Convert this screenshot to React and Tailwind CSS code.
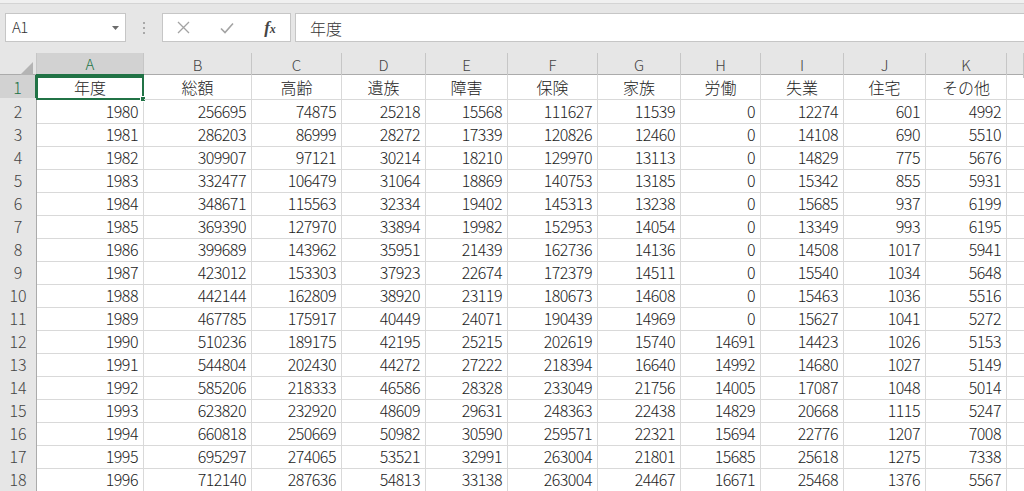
import React from 'react'

const cols = ['A', 'B', 'C', 'D', 'E', 'F', 'G', 'H', 'I', 'J', 'K', '']
const titles = ['年度', '総額', '高齢', '遺族', '障害', '保険', '家族', '労働', '失業', '住宅', 'その他']

const data = [
  [1980, 256695, 74875, 25218, 15568, 111627, 11539, 0, 12274, 601, 4992],
  [1981, 286203, 86999, 28272, 17339, 120826, 12460, 0, 14108, 690, 5510],
  [1982, 309907, 97121, 30214, 18210, 129970, 13113, 0, 14829, 775, 5676],
  [1983, 332477, 106479, 31064, 18869, 140753, 13185, 0, 15342, 855, 5931],
  [1984, 348671, 115563, 32334, 19402, 145313, 13238, 0, 15685, 937, 6199],
  [1985, 369390, 127970, 33894, 19982, 152953, 14054, 0, 13349, 993, 6195],
  [1986, 399689, 143962, 35951, 21439, 162736, 14136, 0, 14508, 1017, 5941],
  [1987, 423012, 153303, 37923, 22674, 172379, 14511, 0, 15540, 1034, 5648],
  [1988, 442144, 162809, 38920, 23119, 180673, 14608, 0, 15463, 1036, 5516],
  [1989, 467785, 175917, 40449, 24071, 190439, 14969, 0, 15627, 1041, 5272],
  [1990, 510236, 189175, 42195, 25215, 202619, 15740, 14691, 14423, 1026, 5153],
  [1991, 544804, 202430, 44272, 27222, 218394, 16640, 14992, 14680, 1027, 5149],
  [1992, 585206, 218333, 46586, 28328, 233049, 21756, 14005, 17087, 1048, 5014],
  [1993, 623820, 232920, 48609, 29631, 248363, 22438, 14829, 20668, 1115, 5247],
  [1994, 660818, 250669, 50982, 30590, 259571, 22321, 15694, 22776, 1207, 7008],
  [1995, 695297, 274065, 53521, 32991, 263004, 21801, 15685, 25618, 1275, 7338],
  [1996, 712140, 287636, 54813, 33138, 263004, 24467, 16671, 25468, 1376, 5567],
]

const gridCols = 'grid grid-cols-[37px_107px_108px_90px_84px_82px_90px_83px_80px_83px_82px_81px_17px]'

function FormulaBar() {
  return (
    <div className="h-[53px] bg-[#e6e6e6] border-t-[3px] border-[#f0f0f0] relative">
      <div className="absolute left-0 right-0 top-0 h-px bg-[#d4d4d4]" />
      <div className="flex items-start pt-[10px]">
        {/* name box */}
        <div className="ml-[5px] w-[121px] h-[29px] bg-white border border-[#c6c6c6] flex items-center justify-between pl-[6px] pr-[6px]">
          <span className="text-[15px] text-[#333] tracking-[-0.5px]">A1</span>
          <svg width="7" height="4" viewBox="0 0 7 4"><path d="M0 0h7L3.5 4z" fill="#6b6b6b" /></svg>
        </div>
        {/* dots */}
        <div className="w-[36px] h-[29px] flex flex-col items-center justify-center gap-[3px]">
          <span className="w-[2px] h-[2px] bg-[#a8a8a8]" />
          <span className="w-[2px] h-[2px] bg-[#a8a8a8]" />
          <span className="w-[2px] h-[2px] bg-[#a8a8a8]" />
        </div>
        {/* buttons */}
        <div className="w-[129px] h-[29px] bg-white border border-[#c6c6c6] flex items-center">
          <div className="w-[40px] flex justify-center">
            <svg width="13" height="13" viewBox="0 0 13 13"><path d="M1 1l11 11M12 1L1 12" stroke="#a3a3a3" strokeWidth="1.3" /></svg>
          </div>
          <div className="w-[48px] flex justify-center">
            <svg width="14" height="12" viewBox="0 0 14 12"><path d="M1 6.5l4 4L13 1.5" stroke="#a3a3a3" strokeWidth="1.6" fill="none" /></svg>
          </div>
          <div className="w-[38px] flex justify-center">
            <span className="italic font-bold text-[17px] text-[#444]" style={{ fontFamily: '"Liberation Serif", serif' }}>f<span className="text-[12px]">x</span></span>
          </div>
        </div>
        {/* input */}
        <div className="ml-[4px] flex-1 h-[29px] bg-white border border-r-0 border-[#c6c6c6] flex items-center pl-[14px]">
          <span className="text-[16px] text-[#333]">年度</span>
        </div>
      </div>
    </div>
  )
}

function HeaderRow() {
  return (
    <div className={`${gridCols} h-[22px] bg-[#e6e6e6] border-b border-[#ababab]`}>
      <div className="border-r border-[#c6c6c6] flex items-end justify-end pr-[3px] pb-[3px]">
        <svg width="13" height="13" viewBox="0 0 13 13"><path d="M13 0V13H0z" fill="#b4b4b4" /></svg>
      </div>
      {cols.map((c, i) => (
        <div
          key={i}
          className={`flex items-center justify-center text-[15px] border-r border-[#c6c6c6] ${c === 'A' ? 'bg-[#d2d2d2] text-[#217346] border-b-2 border-b-[#217346]' : 'text-[#444]'}`}
        >
          {c}
        </div>
      ))}
    </div>
  )
}

function RowHead({ n, active }) {
  return (
    <div className={`flex items-center justify-center text-[16px] border-b border-[#cfcfcf] ${active ? 'bg-[#d2d2d2] text-[#217346] border-r-2 border-r-[#217346]' : 'bg-[#e6e6e6] text-[#444] border-r border-r-[#ababab]'}`}>
      {n}
    </div>
  )
}

export default function App() {
  return (
    <div
      className="w-[1024px] h-[491px] overflow-hidden bg-white font-light"
      style={{ fontFamily: '"Noto Sans CJK JP", "Noto Sans", sans-serif' }}
    >
      <FormulaBar />
      <HeaderRow />

      {/* row 1: titles */}
      <div className={`${gridCols} h-[23px]`}>
        <RowHead n={1} active />
        {titles.map((t, i) => (
          <div key={t} className="relative flex items-center justify-center text-[16px] text-[#222] border-r border-b border-[#d9d9d9]">
            {t}
            {i === 0 && (
              <div className="absolute -left-px -top-px -right-px -bottom-px border-2 border-[#217346]">
                <div className="absolute -right-[4px] -bottom-[4px] w-[6px] h-[6px] bg-[#217346] border border-white" />
              </div>
            )}
          </div>
        ))}
        <div className="border-b border-[#d9d9d9]" />
      </div>

      {data.map((row, r) => (
        <div key={r} className={`${gridCols} h-[23px]`}>
          <RowHead n={r + 2} />
          {row.map((v, i) => (
            <div key={i} className="flex items-center justify-end pr-[5px] pt-px text-[16px] tracking-[-0.5px] text-[#222] border-r border-b border-[#d9d9d9]">
              {v}
            </div>
          ))}
          <div className="border-b border-[#d9d9d9]" />
        </div>
      ))}

      {/* row 19, only its top edge is in view */}
      <div className={`${gridCols} h-[23px]`}>
        <div className="bg-[#e6e6e6] border-r border-[#ababab]" />
        {titles.map((t) => (
          <div key={t} className="border-r border-[#d9d9d9]" />
        ))}
        <div />
      </div>
    </div>
  )
}
